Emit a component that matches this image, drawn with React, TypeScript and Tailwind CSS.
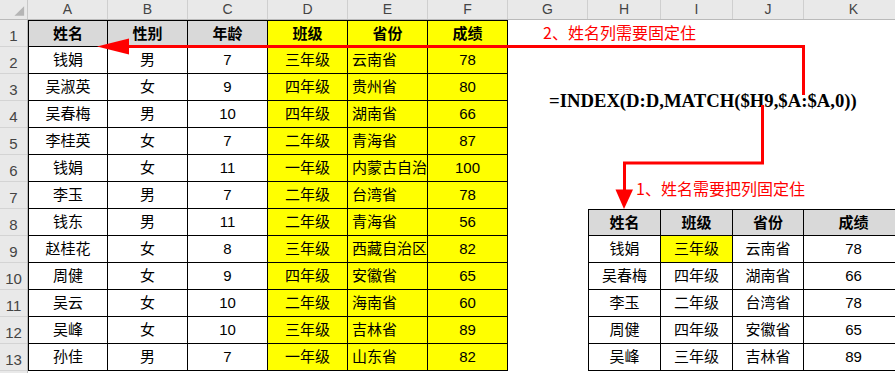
import React from "react";

const mainRows: string[][] = [
  ["姓名", "性别", "年龄", "班级", "省份", "成绩"],
  ["钱娟", "男", "7", "三年级", "云南省", "78"],
  ["吴淑英", "女", "9", "四年级", "贵州省", "80"],
  ["吴春梅", "男", "10", "四年级", "湖南省", "66"],
  ["李桂英", "女", "7", "二年级", "青海省", "87"],
  ["钱娟", "女", "11", "一年级", "内蒙古自治", "100"],
  ["李玉", "男", "7", "二年级", "台湾省", "78"],
  ["钱东", "男", "11", "二年级", "青海省", "56"],
  ["赵桂花", "女", "8", "三年级", "西藏自治区", "82"],
  ["周健", "女", "9", "四年级", "安徽省", "65"],
  ["吴云", "女", "10", "二年级", "海南省", "60"],
  ["吴峰", "女", "10", "三年级", "吉林省", "89"],
  ["孙佳", "男", "7", "一年级", "山东省", "82"],
];

const smallRows: string[][] = [
  ["姓名", "班级", "省份", "成绩"],
  ["钱娟", "三年级", "云南省", "78"],
  ["吴春梅", "四年级", "湖南省", "66"],
  ["李玉", "二年级", "台湾省", "78"],
  ["周健", "四年级", "安徽省", "65"],
  ["吴峰", "三年级", "吉林省", "89"],
];

const colHeaders: { label: string; w: string }[] = [
  { label: "A", w: "w-[80px]" },
  { label: "B", w: "w-[80px]" },
  { label: "C", w: "w-[80px]" },
  { label: "D", w: "w-[80px]" },
  { label: "E", w: "w-[80px]" },
  { label: "F", w: "w-[80px]" },
  { label: "G", w: "w-[80px]" },
  { label: "H", w: "w-[73px]" },
  { label: "I", w: "w-[72px]" },
  { label: "J", w: "w-[71px]" },
  { label: "K", w: "w-[100px]" },
];

function MainCell({ r, c, text }: { r: number; c: number; text: string }) {
  let bg = "bg-white";
  if (c >= 3) bg = "bg-[#ffff00]";
  else if (r === 0) bg = "bg-[#d9d9d9]";
  const align = c === 4 && r > 0 ? "justify-start pl-[4px]" : "justify-center";
  const weight = r === 0 ? "font-bold" : "font-normal";
  return (
    <div
      className={`flex items-center pt-[1px] border-r border-b border-black text-[15px] text-black whitespace-nowrap overflow-hidden ${bg} ${align} ${weight}`}
    >
      {text}
    </div>
  );
}

function SmallCell({ r, c, text }: { r: number; c: number; text: string }) {
  let bg = "bg-white";
  if (r === 0) bg = "bg-[#d9d9d9]";
  else if (r === 1 && c === 1) bg = "bg-[#ffff00]";
  const weight = r === 0 ? "font-bold" : "font-normal";
  return (
    <div
      className={`flex items-center justify-center pt-[1px] border-r border-b border-black text-[15px] text-black whitespace-nowrap ${bg} ${weight}`}
    >
      {text}
    </div>
  );
}

export default function App() {
  return (
    <div className="relative w-[895px] h-[373px] overflow-hidden bg-white font-['Liberation_Sans','Noto_Sans_CJK_SC',sans-serif]">
      {/* column headers */}
      <div className="flex h-[20px] bg-[#e9e9e9] border-b border-[#bababa]">
        <div className="w-[28px] shrink-0 border-r border-[#c8c8c8] flex items-end justify-end">
          <svg width="28" height="19" viewBox="0 0 28 19">
            <polygon points="25,6 25,16 15,16" fill="#b5b5b5" />
          </svg>
        </div>
        {colHeaders.map((h) => (
          <div
            key={h.label}
            className={`${h.w} shrink-0 border-r border-[#cfcfcf] flex items-center justify-center text-[14px] text-[#444]`}
          >
            {h.label}
          </div>
        ))}
      </div>

      {/* body */}
      <div className="flex">
        {/* row headers */}
        <div className="w-[28px] shrink-0 flex flex-col bg-[#e9e9e9] border-r border-[#bababa]">
          {Array.from({ length: 14 }, (_, i) => (
            <div
              key={i}
              className="h-[27px] shrink-0 border-b border-[#d4d4d4] flex items-end justify-center pb-[1px] text-[15px] leading-[18px] text-[#444]"
            >
              {i < 13 ? i + 1 : ""}
            </div>
          ))}
        </div>

        {/* main table A1:F13 */}
        <div className="shrink-0 self-start grid grid-cols-[79px_repeat(5,80px)] grid-rows-[26px_repeat(12,27px)] border-l border-t border-black">
          {mainRows.map((row, r) =>
            row.map((t, c) => <MainCell key={`${r}-${c}`} r={r} c={c} text={t} />)
          )}
        </div>

        {/* right area G..K */}
        <div className="shrink-0 grid grid-cols-[80px_73px_72px_71px_100px] grid-rows-[repeat(13,27px)]">
          <div className="row-start-1 col-start-1 col-span-5 flex items-center pb-[3px] pl-[35px] text-[16px] leading-[20px] text-[#ff0000] whitespace-nowrap font-['Noto_Sans_CJK_SC',sans-serif]">
            2、姓名列需要固定住
          </div>
          <div className="row-start-3 row-span-2 col-start-1 col-span-5 flex items-center pl-[41px] text-[18.7px] leading-none font-bold text-black whitespace-nowrap font-['Liberation_Serif',serif]">
            =INDEX(D:D,MATCH($H9,$A:$A,0))
          </div>
          <div className="row-start-6 row-span-2 col-start-2 col-span-4 flex items-end pb-[11px] pl-[48px] text-[16px] leading-[20px] text-[#ff0000] whitespace-nowrap font-['Noto_Sans_CJK_SC',sans-serif]">
            1、姓名需要把列固定住
          </div>
          <div className="row-start-8 row-span-6 col-start-2 col-span-4 self-start grid grid-cols-[72px_72px_71px_100px] grid-rows-[26px_repeat(5,27px)] border-l border-t border-black">
            {smallRows.map((row, r) =>
              row.map((t, c) => <SmallCell key={`${r}-${c}`} r={r} c={c} text={t} />)
            )}
          </div>
        </div>
      </div>

      {/* red arrows overlay */}
      <svg
        className="absolute left-0 top-0 pointer-events-none"
        width="895"
        height="373"
        viewBox="0 0 895 373"
      >
        <polyline
          points="126,46.5 803.5,46.5 803.5,95"
          fill="none"
          stroke="#ff0000"
          strokeWidth="3"
        />
        <polygon points="97,46.5 129,38.5 129,54.5" fill="#ff0000" />
        <polyline
          points="762.5,105 762.5,163 624.5,163 624.5,192"
          fill="none"
          stroke="#ff0000"
          strokeWidth="3"
        />
        <polygon points="624,209 615.5,189.5 633,189.5" fill="#ff0000" />
      </svg>
    </div>
  );
}
